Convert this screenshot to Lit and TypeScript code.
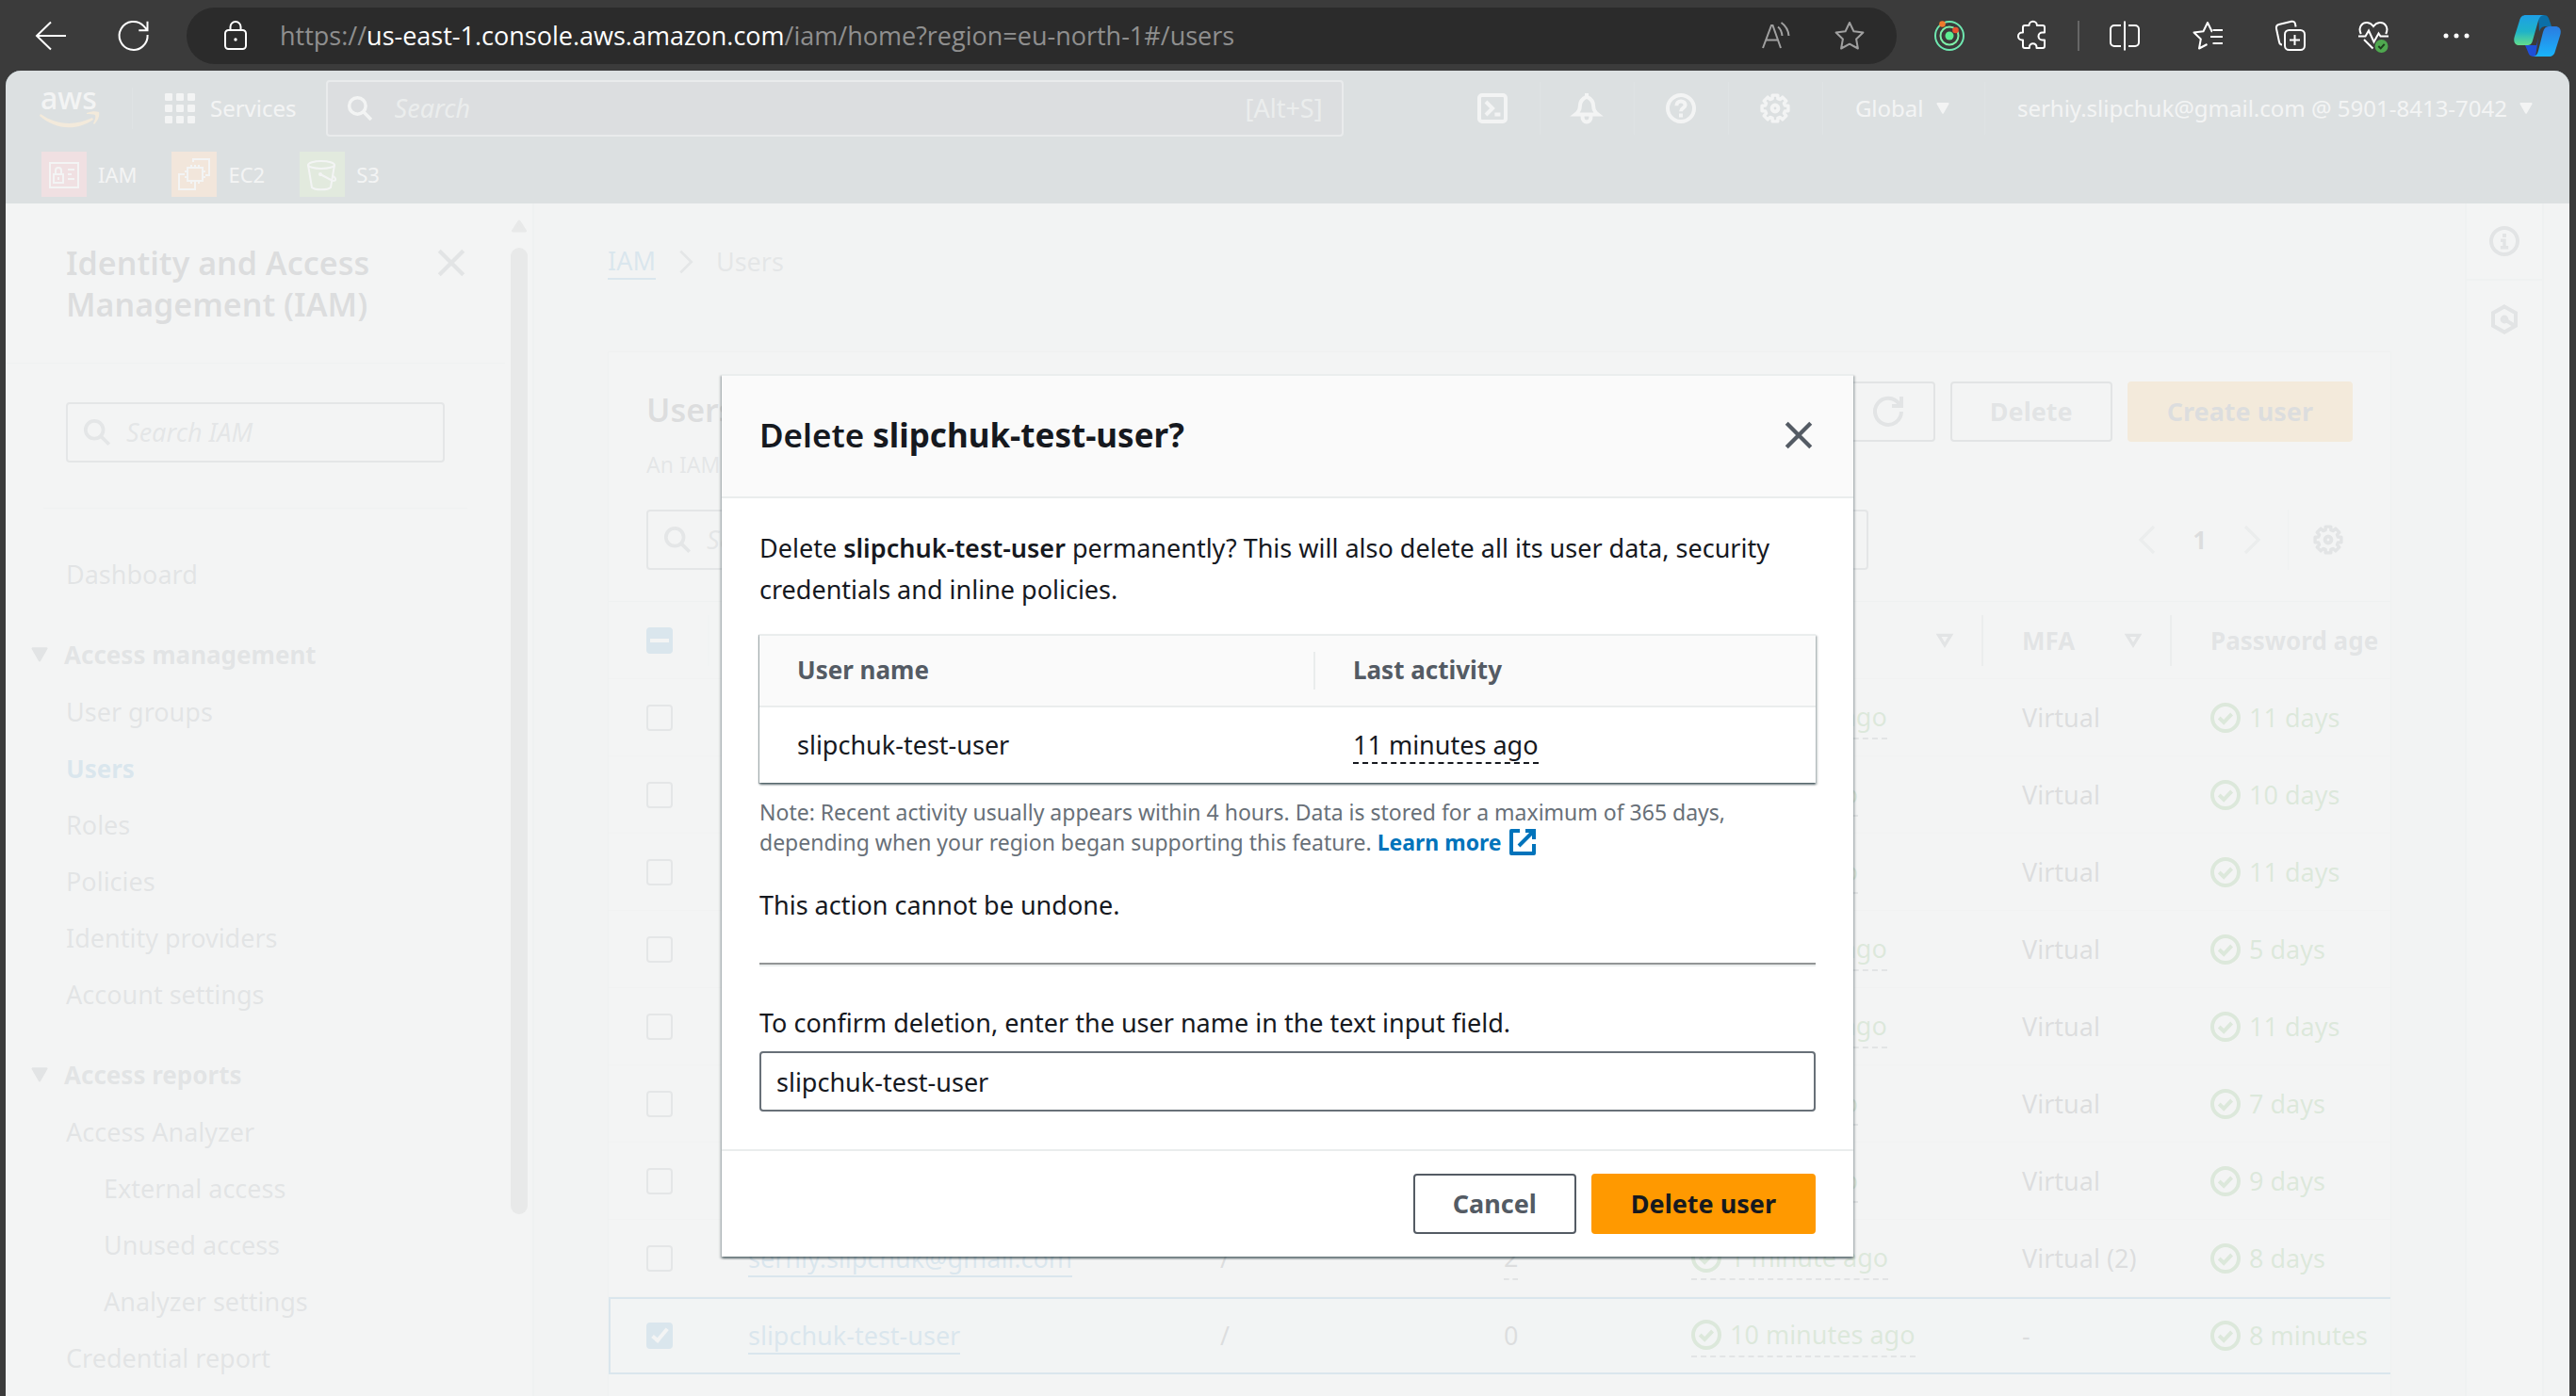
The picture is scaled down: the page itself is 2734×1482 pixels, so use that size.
import { LitElement, html, svg, css, nothing } from "lit";
import { customElement, property } from "lit/decorators.js";
import { classMap } from "lit/directives/class-map.js";

const gearPath = (() => {
  const pts: string[] = [];
  for (let i = 0; i < 8; i++) {
    const base = (i * Math.PI) / 4 - Math.PI / 2;
    const corners: [number, number][] = [[-0.27, 5.4], [-0.2, 7.1], [0.2, 7.1], [0.27, 5.4]];
    for (const [off, r] of corners) {
      pts.push(`${(8 + r * Math.cos(base + off)).toFixed(2)} ${(8 + r * Math.sin(base + off)).toFixed(2)}`);
    }
  }
  return `M${pts.join("L")}Z`;
})();

/* Line icons on a 16-unit grid. */
const consoleIcons: Record<string, unknown> = {
  search: svg`<circle cx="6.5" cy="6.5" r="5"/><path d="M10.2 10.2l4.6 4.6"/>`,
  close: svg`<path d="M2 2l12 12M14 2L2 14"/>`,
  refresh: svg`<path d="M10 5h5V0"/><path d="M15 8a7 7 0 1 1-1.2-4"/>`,
  gear: svg`<path stroke-width="1.7" stroke-linejoin="round" d=${gearPath}/><circle cx="8" cy="8" r="1.7"/>`,
  positive: svg`<circle cx="8" cy="8" r="7"/><path d="M4.6 8l2.5 2.4 4.2-4.4"/>`,
  info: svg`<circle cx="8" cy="8" r="7"/><path d="M8 4v2" /><path d="M6 7.6h2v4M5.9 11.4h4.2" stroke-width="1.7"/>`,
  hexagon: svg`<path d="M8 1.2l6 3.4v6.8l-6 3.4-6-3.4V4.600z"/><circle cx="8" cy="8" r="1.2"/><path d="M8.5 8.400l5 3"/>`,
  external: svg`<path d="M9.500 2H14v4.500M6 10l8-8"/><path d="M14 9v5H2V2h4.500" stroke-linejoin="round"/>`,
  caret: svg`<path d="M3.500 4h9L8 11.800z" fill="currentColor" stroke-width="1.5" stroke-linejoin="round"/>`,
  sort: svg`<path d="M4 4.500h8L8 11z"/>`,
  left: svg`<path d="M11.500 1l-7 7 7 7" stroke-width="1.7"/>`,
  right: svg`<path d="M4.500 1l7 7-7 7" stroke-width="1.7"/>`,
  grid: svg`<g fill="currentColor" stroke="none">${[0, 6, 12].map((y) => [0, 6, 12].map((x) => svg`<rect x=${x} y=${y} width="4" height="4" rx=".6"/>`))}</g>`,
  shell: svg`<rect x="1" y="1" width="14" height="14" rx="1.500"/><path d="M4.500 4.500L8 8l-3.500 3.500M9.200 11.200h3"/>`,
  bell: svg`<path d="M8 1.800c-2.700 1.200-3.600 3-3.600 5.200 0 2-1 3.200-2.400 4.300h12c-1.400-1.100-2.400-2.300-2.400-4.300 0-2.200-.9-4-3.600-5.200zM8 0v2"/><path d="M5.800 12v1a2.200 2.200 0 0 0 4.400 0v-1"/>`,
  help: svg`<circle cx="8" cy="8" r="7"/><path d="M5.700 6.600C5.700 5 6.700 4.200 8 4.200s2.300.8 2.300 2c0 1.700-2.300 1.600-2.300 3.400"/><path d="M8 10.800v2"/>`,
};

/* Toolbar icons on a 32-unit grid. */
const toolbarIcons: Record<string, unknown> = {
  back: svg`<path d="M32 16H1M16 1.500L1 16l15 14.500"/>`,
  reload: svg`<path d="M30.600 15A15 15 0 1 1 26.500 5.600l3.500 4M30.500 .8v9.400h-9.200"/>`,
  lock: svg`<rect x="5" y="10" width="22" height="20" rx="3.500"/><path d="M10.500 10V6.500a5.500 5.500 0 0 1 11 0V10"/><circle cx="16" cy="20" r="1.700" fill="currentColor" stroke="none"/>`,
  star: svg`<path d="M16 2l4.400 9.200 10 1.300-7.300 7 1.800 10L16 24.700 7.100 29.500l1.800-10-7.300-7 10-1.300z" stroke-linejoin="round"/>`,
  read: svg`<path d="M2 29L11 5h1.500L21 29M5 20.500h13"/><path d="M18 6.500c2.600 2 4 5 4.500 9.500M21.500 2c5 3.500 7.500 8 8 14"/>`,
  puzzle: svg`<path stroke-linejoin="round" d="M12.500 5a4.200 4.200 0 0 1 8.400 0H27a2 2 0 0 1 2 2v5.500h-2.500a4 4 0 0 0 0 8H29V27a2 2 0 0 1-2 2h-6.500v-1a3.800 3.800 0 0 0-7.600 0v1H8a2 2 0 0 1-2-2v-6.500H5a4 4 0 0 1 0-8h1V7a2 2 0 0 1 2-2z"/>`,
  split: svg`<path d="M12 5H5a4 4 0 0 0-4 4v14a4 4 0 0 0 4 4h7M20 5h7a4 4 0 0 1 4 4v14a4 4 0 0 1-4 4h-7M16 .5v31"/>`,
  favorites: svg`<path stroke-linejoin="round" d="M21 11.200h-.5L16 2l-4.500 9.200-10 1.300 7.300 7L7 29.500l8.500-4.500"/><path d="M21.500 10H32M19 17h13M21.500 24H32"/>`,
  collections: svg`<rect x="10" y="10" width="21" height="21" rx="4.500"/><path d="M20.500 15v11M15 20.500h11"/><path d="M7 25.500c-1.500 0-2.600-1-3-3L1 8.500C.5 6 1.500 4.600 3.600 4L17 .8c2.300-.5 3.800.8 4 2.700l.6 3"/>`,
  health: svg`<path d="M2.800 14C-1 6 5 1.500 9.500 2c3 .3 5 2 6.500 4 1.500-2 3.500-3.700 6.500-4C27 1.500 33 6 29.200 14M0 16.500h7.500l3.500-6 5.500 12 5-9 2 3H32M6 20l9.500 9.500"/><circle cx="24.500" cy="27" r="7" fill="#4fa84f" stroke="none"/><path d="M21.300 27l2.400 2.400 4-4.600" stroke="#1d3d1d"/>`,
  more: svg`<g fill="currentColor" stroke="none"><circle cx="5" cy="16" r="2.500"/><circle cx="16" cy="16" r="2.500"/><circle cx="27" cy="16" r="2.500"/></g>`,
  rings: svg`<g stroke="#7ef0a8"><circle cx="16" cy="16" r="15" stroke="#6fe8b0"/><circle cx="16" cy="16" r="9.500"/></g><circle cx="16" cy="16" r="4.500" fill="#5dee92" stroke="none"/><circle cx="8.500" cy="3.500" r="3.300" fill="#f07a2c" stroke="none"/><circle cx="22.500" cy="10" r="3.300" fill="#e8532f" stroke="none"/>`,
};

const glyph = (name: string, cls = "") =>
  html`<svg class="ico ${cls}" viewBox="0 0 16 16" fill="none" stroke="currentColor" stroke-width="2" aria-hidden="true">${consoleIcons[name]}</svg>`;
const tool = (name: string) =>
  html`<svg class="ico" viewBox="0 0 32 32" fill="none" stroke="currentColor" stroke-width="2" aria-hidden="true">${toolbarIcons[name]}</svg>`;

const shared = css`
  *, *::before, *::after { box-sizing: border-box; }
  :host { display: block; font: 27px/44px "Noto Sans", "Open Sans", sans-serif; color: #16191f; }
  button, input { font: inherit; color: inherit; margin: 0; }
  button { background: none; border: 0; padding: 0; display: flex; align-items: center; justify-content: center; }
  h1, h2, p, ul, table { margin: 0; padding: 0; }
  ul { list-style: none; }
  a { color: inherit; text-decoration: none; }
  .ico { width: 32px; height: 32px; display: block; flex: none; overflow: visible; }
  .btn { height: 64px; padding: 0 40px; border: 2px solid #545b64; border-radius: 4px; color: #545b64; font-weight: 700; white-space: nowrap; }
  .btn.primary { background: #ff9900; border-color: #ff9900; color: #16191f; }
`;

@customElement("browser-toolbar")
class BrowserToolbar extends LitElement {
  static styles = [shared, css`
    :host { color: #fff; }
    .bar { display: flex; align-items: center; height: 75px; padding-left: 10px; background: #3b3b3b; }
    .slot { width: 88px; height: 60px; }
    .slot.last { width: 83px; }
    .address { flex: 1; display: flex; align-items: center; height: 60px; margin: 0 12px; padding: 0 34px 0 36px; border-radius: 30px; background: #2b2b2b; }
    .url { flex: 1; margin-left: 31px; color: #8f8f8f; font: 27px/36px "Open Sans", sans-serif; white-space: nowrap; }
    .url b { color: #fff; font-weight: 400; }
    .address button { color: #a0a0a0; margin-left: 46px; }
    .address .site { color: #fff; margin: 0; }
    .rule { width: 2px; height: 32px; margin: 0 4px; background: #666; }
    .copilot { width: 50px; height: 44px; }
  `];
  render() {
    const slot = (label: string, name: string) => html`<button class="slot" aria-label=${label}>${tool(name)}</button>`;
    return html`<div class="bar">
      ${slot("Back", "back")}${slot("Refresh", "reload")}
      <div class="address">
        <button class="site" aria-label="Site information">${tool("lock")}</button>
        <span class="url">https://<b>us-east-1.console.aws.amazon.com</b>/iam/home?region=eu-north-1#/users</span>
        <button aria-label="Read aloud">${tool("read")}</button>
        <button aria-label="Add to favorites">${tool("star")}</button>
      </div>
      ${slot("Extension", "rings")}${slot("Extensions", "puzzle")}
      <span class="rule"></span>
      ${slot("Split screen", "split")}${slot("Favorites", "favorites")}${slot("Collections", "collections")}
      ${slot("Browser essentials", "health")}${slot("More", "more")}
      <button class="slot last" aria-label="Copilot">
        <svg class="copilot" viewBox="0 0 50 44" aria-hidden="true">
          <defs>
            <linearGradient id="ca" x1="0" y1="0" x2="0" y2="1"><stop offset="0" stop-color="#1d9fe6"/><stop offset=".55" stop-color="#1fb3c8"/><stop offset="1" stop-color="#63dd8c"/></linearGradient>
            <linearGradient id="cb" x1="0" y1="0" x2="0" y2="1"><stop offset="0" stop-color="#2b7be0"/><stop offset="1" stop-color="#19b4fb"/></linearGradient>
          </defs>
          <path d="M26 0h6c4 0 5 3 6 6l2 6h-6c-4 0-6 2-7 6z" fill="#0b6fa8"/>
          <path d="M12 32h12l2-8-3 20c-6 0-7-2-8-5z" fill="#1f4fd8"/>
          <path d="M13 0h19c-3 0-5 2-6 6l-6 21c-1 4-3 5-6 5H6c-5 0-7-4-5-10L6 6c1-4 3-6 7-6z" fill="url(#ca)"/>
          <path d="M37 44H20c3 0 5-2 6-6l5-20c1-4 3-6 6-6h7c5 0 7 4 5 10l-5 16c-1 4-3 6-7 6z" fill="url(#cb)"/>
        </svg>
      </button>
    </div>`;
  }
}

@customElement("console-header")
class ConsoleHeader extends LitElement {
  static styles = [shared, css`
    :host { background: #1c3540; color: #fff; font-size: 24px; }
    .top { display: flex; align-items: center; height: 80px; padding: 0 36px; white-space: nowrap; }
    .logo { width: 64px; height: 60px; }
    .logo text { font: 500 32px "Noto Sans", sans-serif; }
    .services { gap: 16px; margin-left: 34px; padding-left: 34px; height: 44px; border-left: 1px solid #34505c; }
    .search { flex: 0 1 1080px; display: flex; align-items: center; gap: 20px; height: 60px; margin-left: 31px; padding: 0 20px; border: 2px solid #98a4ae; border-radius: 4px; background: #192534; font-size: 27px; }
    .search .ico { width: 28px; height: 28px; }
    .search input { flex: 1; min-width: 0; border: 0; padding: 0 0 0 3px; background: none; }
    .search input::placeholder { color: #aab7b8; font-style: italic; opacity: 1; }
    .search span { color: #aab7b8; }
    .gap { flex: 1; }
    .cell { width: 100px; height: 56px; border-right: 1px solid #34505c; }
    .menu { gap: 10px; height: 56px; padding-left: 34px; }
    .menu.region { width: 172px; border-right: 1px solid #34505c; justify-content: flex-start; }
    .menu .ico { width: 20px; height: 24px; }
    .favs { display: flex; align-items: center; height: 61px; padding: 0 0 2px 38px; gap: 37px; font-size: 22px; }
    .favs a { display: flex; align-items: center; gap: 12px; }
    .tile { width: 48px; height: 48px; }
  `];
  render() {
    return html`<header>
      <div class="top">
        <svg class="logo" viewBox="0 0 64 60" role="img" aria-label="AWS">
          <text x="1" y="31" fill="#fff">aws</text>
          <path d="M1 36c17 12 36 13 55 4l1 2C38 55 16 52 0 38z" fill="#ff9900"/>
          <path d="M50 35c5-2 10-2 13-1 1 4-1 9-5 13l-1-1c2-4 3-7 2-9-2-1-5-1-9-1z" fill="#ff9900"/>
        </svg>
        <button class="services">${glyph("grid")}Services</button>
        <label class="search">${glyph("search")}<input type="text" placeholder="Search" aria-label="Search" /><span>[Alt+S]</span></label>
        <span class="gap"></span>
        <button class="cell" aria-label="CloudShell">${glyph("shell")}</button>
        <button class="cell" aria-label="Notifications">${glyph("bell")}</button>
        <button class="cell" aria-label="Support">${glyph("help")}</button>
        <button class="cell" aria-label="Settings">${glyph("gear")}</button>
        <button class="menu region">Global ${glyph("caret")}</button>
        <button class="menu">serhiy.slipchuk@gmail.com @ 5901-8413-7042 ${glyph("caret")}</button>
      </div>
      <nav class="favs" aria-label="Favorites">
        <a href="#iam"><svg class="tile" viewBox="0 0 48 48" fill="none" stroke="#fff" stroke-width="2"><rect width="48" height="48" fill="#dd344c" stroke="none"/><path d="M9 12h30v26H9zM13 24h10v9H13zM15 24v-4a3 3 0 0 1 6 0v4M28 19h7M28 24h4M28 29h7M18 27v3"/></svg>IAM</a>
        <a href="#ec2"><svg class="tile" viewBox="0 0 48 48" fill="none" stroke="#fff" stroke-width="2"><rect width="48" height="48" fill="#ed7100" stroke="none"/><path d="M17 17h16v14H17zM21 17v-3M25 17v-3M29 17v-3M21 34v-3M25 34v-3M29 34v-3M14 21h3M14 27h3M33 21h3M33 27h3M23 11V8h17v17h-4M14 24H8v16h17v-6"/></svg>EC2</a>
        <a href="#s3"><svg class="tile" viewBox="0 0 48 48" fill="none" stroke="#fff" stroke-width="2"><rect width="48" height="48" fill="#4f9a24" stroke="none"/><ellipse cx="23" cy="14" rx="14" ry="4"/><path d="M9 14l4 24c3 3 17 3 20 0l4-24M22 24l13 7c4 0 4-2 1-5"/><circle cx="22" cy="24" r="1"/></svg>S3</a>
      </nav>
    </header>`;
  }
}

type NavItem = { label: string; active?: boolean; nested?: boolean };
const navGroups: { title?: string; items: NavItem[] }[] = [
  { items: [{ label: "Dashboard" }] },
  {
    title: "Access management",
    items: [{ label: "User groups" }, { label: "Users", active: true }, { label: "Roles" }, { label: "Policies" }, { label: "Identity providers" }, { label: "Account settings" }],
  },
  {
    title: "Access reports",
    items: [{ label: "Access Analyzer" }, { label: "External access", nested: true }, { label: "Unused access", nested: true }, { label: "Analyzer settings", nested: true }, { label: "Credential report" }],
  },
];

@customElement("side-navigation")
class SideNavigation extends LitElement {
  static styles = [shared, css`
    :host { background: #fff; border-right: 2px solid #d5dbdb; }
    .wrap { display: flex; height: 100%; }
    .content { flex: 1; min-width: 0; color: #545b64; }
    .head { display: flex; justify-content: space-between; padding: 41px 44px 40px 64px; border-bottom: 1px solid #d5dbdb; }
    h2 { width: 340px; font-size: 34px; line-height: 44px; font-weight: 600; color: #16191f; }
    .head button { height: 44px; }
    .head .ico { width: 34px; height: 34px; margin-right: -4px; }
    .search { display: flex; align-items: center; gap: 16px; height: 64px; margin: 41px 64px 48px; padding: 0 16px; border: 2px solid #687078; border-radius: 4px; }
    .search .ico { width: 30px; height: 30px; color: #687078; }
    .search input { flex: 1; min-width: 0; border: 0; padding: 0; background: none; }
    .search input::placeholder { color: #687078; font-style: italic; opacity: 1; }
    nav { margin: 0 40px; padding-top: 40px; border-top: 1px solid #d5dbdb; display: grid; gap: 24px; }
    li { height: 60px; display: flex; align-items: center; padding-left: 24px; white-space: nowrap; }
    li.nested { padding-left: 64px; }
    li.active { color: #0073bb; font-weight: 700; font-size: 26px; }
    .group { display: flex; height: 62px; margin-left: -17px; gap: 13px; font-size: 26px; font-weight: 700; }
    .group .ico { width: 26px; height: 26px; }
    .scroll { width: 29px; padding: 15px 5px 0 6px; display: flex; flex: none; flex-direction: column; gap: 14px; color: #8a8a8a; }
    .scroll .ico { width: 18px; height: 18px; }
    .thumb { height: 82%; border-radius: 9px; background: #8a8a8a; }
  `];
  render() {
    return html`<div class="wrap">
      <div class="content">
        <div class="head"><h2>Identity and Access Management (IAM)</h2><button aria-label="Close navigation">${glyph("close")}</button></div>
        <label class="search">${glyph("search")}<input type="text" placeholder="Search IAM" aria-label="Search IAM" /></label>
        <nav aria-label="IAM">
          ${navGroups.map((g) => html`<div>
            ${g.title ? html`<button class="group">${glyph("caret")}${g.title}</button>` : nothing}
            <ul>${g.items.map((i) => html`<li class=${classMap({ active: !!i.active, nested: !!i.nested })}><a href="#users">${i.label}</a></li>`)}</ul>
          </div>`)}
        </nav>
      </div>
      <div class="scroll" aria-hidden="true">
        <svg class="ico" viewBox="0 0 18 18"><path d="M9 4l6.500 10h-13z" fill="currentColor" stroke="currentColor" stroke-width="3" stroke-linejoin="round"/></svg>
        <div class="thumb"></div>
      </div>
    </div>`;
  }
}

type UserRow = { name: string; groups: string; activity: string; mfa: string; age: string; selected?: boolean };
const users: UserRow[] = [
  { name: "", groups: "", activity: "16 hours ago", mfa: "Virtual", age: "11 days" },
  { name: "", groups: "", activity: "2 days ago", mfa: "Virtual", age: "10 days" },
  { name: "", groups: "", activity: "2 days ago", mfa: "Virtual", age: "11 days" },
  { name: "", groups: "", activity: "16 hours ago", mfa: "Virtual", age: "5 days" },
  { name: "", groups: "", activity: "16 hours ago", mfa: "Virtual", age: "11 days" },
  { name: "", groups: "", activity: "2 days ago", mfa: "Virtual", age: "7 days" },
  { name: "", groups: "", activity: "2 days ago", mfa: "Virtual", age: "9 days" },
  { name: "serhiy.slipchuk@gmail.com", groups: "2", activity: "1 minute ago", mfa: "Virtual (2)", age: "8 days" },
  { name: "slipchuk-test-user", groups: "0", activity: "10 minutes ago", mfa: "-", age: "8 minutes", selected: true },
];

@customElement("users-page")
class UsersPage extends LitElement {
  static styles = [shared, css`
    :host { padding: 43px 78px 0; min-width: 0; background: #f2f3f3; }
    .crumbs { display: flex; align-items: center; gap: 19px; height: 38px; color: #687078; line-height: 36px; }
    .crumbs a { color: #0073bb; border-bottom: 2px solid #0073bb; }
    .crumbs .ico { width: 26px; height: 32px; }
    .card { margin-top: 76px; height: 100%; background: #fff; border: 1px solid #d5dbdb; overflow: hidden; }
    .head { display: flex; gap: 16px; padding: 31px 40px 0; }
    .title { flex: 1; padding-top: 8px; }
    h1 { font-size: 34px; line-height: 44px; font-weight: 600; }
    .title p { margin-top: 20px; font-size: 23px; line-height: 32px; color: #687078; white-space: nowrap; }
    .refresh { padding: 0 32px; }
    .tools { display: flex; align-items: center; justify-content: space-between; padding: 32px 50px 33px 40px; }
    .search { display: flex; align-items: center; gap: 16px; width: 1297px; height: 64px; padding: 0 16px; border: 2px solid #687078; border-radius: 4px; }
    .search .ico { width: 30px; height: 30px; color: #687078; }
    .search input { flex: 1; border: 0; padding: 0; background: none; }
    .search input::placeholder { color: #687078; font-style: italic; opacity: 1; }
    .pager { display: flex; align-items: center; color: #aab7b8; gap: 32px; }
    .pager b { color: #16191f; font-size: 26px; }
    .pager .prefs { height: 64px; margin-left: -10px; padding-left: 26px; border-left: 1px solid #d5dbdb; color: #545b64; }
    table { width: 2000px; table-layout: fixed; border-collapse: separate; border-spacing: 0; border-top: 1px solid #d5dbdb; }
    .c-box { width: 108px; } .c-name { width: 501px; } .c-path { width: 301px; } .c-groups { width: 199px; } .c-last { width: 351px; } .c-mfa { width: 200px; }
    tr { height: 82px; }
    th, td { padding: 0; text-align: left; border-bottom: 1px solid #e3e8e8; white-space: nowrap; }
    th { font-size: 26px; color: #545b64; }
    td { padding-left: 40px; }
    .th { display: flex; align-items: center; justify-content: space-between; height: 54px; margin-right: 1px; padding: 0 26px 0 40px; border-right: 2px solid #aab7b8; }
    .th.plain { border-right-color: #eaeded; }
    .th .ico { width: 26px; height: 26px; }
    tr.selected td { background: #f1faff; border-top: 2px solid #0073bb; border-bottom: 2px solid #0073bb; }
    tr.selected td:first-child { border-left: 2px solid #0073bb; padding-left: 38px; }
    input[type="checkbox"] { appearance: none; width: 28px; height: 28px; border: 2px solid #687078; border-radius: 4px; display: grid; place-items: center; }
    input[type="checkbox"]:checked, input[type="checkbox"]:indeterminate { background-color: #0073bb; border-color: #0073bb; }
    input[type="checkbox"]:indeterminate::before { content: ""; width: 20px; height: 4px; background: #fff; }
    input[type="checkbox"]:checked::before { content: ""; width: 9px; height: 18px; margin-bottom: 5px; border: solid #fff; border-width: 0 4px 4px 0; transform: rotate(40deg); }
    .link { display: inline-block; line-height: 36px; color: #0073bb; border-bottom: 2px solid #0073bb; }
    .ok { display: flex; width: max-content; align-items: center; gap: 9px; color: #1d8102; }
    .dash { border-bottom: 2px dashed #545b64; }
    .num { display: inline-block; line-height: 44px; }
  `];
  render() {
    const col = (label: string) => html`<th scope="col"><div class="th">${label}${label ? glyph("sort") : nothing}</div></th>`;
    return html`
      <nav class="crumbs" aria-label="Breadcrumb"><a href="#iam">IAM</a>${glyph("right")}<span>Users</span></nav>
      <section class="card">
        <div class="head">
          <div class="title"><h1>Users (9)</h1><p>An IAM user is an identity with long-term credentials that is used to interact with AWS in an account.</p></div>
          <button class="btn refresh" aria-label="Refresh">${glyph("refresh")}</button>
          <button class="btn">Delete</button>
          <button class="btn primary">Create user</button>
        </div>
        <div class="tools">
          <label class="search">${glyph("search")}<input type="text" placeholder="Search" aria-label="Search users" /></label>
          <div class="pager">
            <button aria-label="Previous page">${glyph("left")}</button><b>1</b><button aria-label="Next page">${glyph("right")}</button>
            <button class="prefs" aria-label="Preferences">${glyph("gear")}</button>
          </div>
        </div>
        <table>
          <colgroup><col class="c-box" /><col class="c-name" /><col class="c-path" /><col class="c-groups" /><col class="c-last" /><col class="c-mfa" /><col /></colgroup>
          <thead><tr>
            <th><div class="th plain"><input type="checkbox" aria-label="Select all users" .indeterminate=${true} /></div></th>
            ${col("User name")}${col("Path")}${col("Groups")}${col("Last activity")}${col("MFA")}${col("Password age")}
          </tr></thead>
          <tbody>
            ${users.map((u) => html`<tr class=${classMap({ selected: !!u.selected })}>
              <td><input type="checkbox" aria-label="Select user" .checked=${!!u.selected} /></td>
              <td>${u.name ? html`<a class="link" href="#user">${u.name}</a>` : nothing}</td>
              <td>/</td>
              <td>${u.groups ? html`<span class=${classMap({ num: true, dash: u.groups !== "0" })}>${u.groups}</span>` : nothing}</td>
              <td><span class="ok dash">${glyph("positive")}${u.activity}</span></td>
              <td>${u.mfa}</td>
              <td><span class="ok">${glyph("positive")}${u.age}</span></td>
            </tr>`)}
          </tbody>
        </table>
      </section>`;
  }
}

@customElement("delete-dialog")
class DeleteDialog extends LitElement {
  @property() user = "";
  static styles = [shared, css`
    :host { width: 1201px; background: #fff; border-top: 2px solid #eaeded; box-shadow: 0 2px 2px rgba(0, 28, 36, .4), 2px 2px 2px rgba(0, 28, 36, .18), -2px 2px 2px rgba(0, 28, 36, .18); }
    .head { display: flex; align-items: center; justify-content: space-between; height: 130px; padding: 0 38px 2px 40px; background: #fafafa; border-bottom: 2px solid #eaeded; }
    h2 { font-size: 35px; line-height: 44px; font-weight: 600; }
    h2 b { font-weight: 700; }
    .head button { width: 40px; height: 40px; color: #545b64; }
    .head .ico { width: 34px; height: 34px; }
    .body { padding: 31px 40px 40px; }
    .body b { font-weight: 600; }
    table { width: 100%; margin-top: 25px; border-spacing: 0; table-layout: fixed; border-top: 2px solid #eaeded; box-shadow: 0 2px 2px rgba(0, 28, 36, .5), 2px 2px 2px rgba(0, 28, 36, .18), -1px 1px 1px rgba(0, 28, 36, .25); }
    .c-user { width: 590px; }
    th, td { padding: 0; text-align: left; }
    th { height: 76px; background: #fafafa; border-bottom: 2px solid #eaeded; font-size: 26px; color: #545b64; }
    th div { height: 40px; line-height: 38px; padding-left: 40px; }
    th:first-child div { border-right: 2px solid #eaeded; }
    td { height: 80px; padding-left: 40px; }
    .dash { display: inline-block; line-height: 36px; border-bottom: 2px dashed #16191f; }
    .note { margin-top: 15px; font-size: 23px; line-height: 32px; color: #687078; }
    .note a { display: inline-flex; align-items: center; gap: 6px; vertical-align: top; color: #0073bb; font-weight: 700; }
    .note .ico { width: 32px; height: 32px; }
    .final { margin-top: 29px; }
    hr { margin: 39px 0 38px; border: 0; height: 4px; border-top: 2px solid #929596; border-bottom: 2px solid #eaeded; }
    label { display: block; }
    input { display: block; width: 100%; height: 64px; margin-top: 8px; padding: 0 16px; border: 2px solid #687078; border-radius: 4px; background: #fff; }
    .foot { display: flex; justify-content: flex-end; gap: 16px; padding: 24px 40px; border-top: 2px solid #eaeded; }
  `];
  render() {
    return html`
      <div class="head"><h2 id="title">Delete <b>${this.user}?</b></h2><button aria-label="Close dialog">${glyph("close")}</button></div>
      <div class="body">
        <p>Delete <b>${this.user}</b> permanently? This will also delete all its user data, security credentials and inline policies.</p>
        <table>
          <colgroup><col class="c-user" /><col /></colgroup>
          <thead><tr><th scope="col"><div>User name</div></th><th scope="col"><div>Last activity</div></th></tr></thead>
          <tbody><tr><td>${this.user}</td><td><span class="dash">11 minutes ago</span></td></tr></tbody>
        </table>
        <p class="note">Note: Recent activity usually appears within 4 hours. Data is stored for a maximum of 365 days, depending when your region began supporting this feature. <a href="#learn">Learn more ${glyph("external")}</a></p>
        <p class="final">This action cannot be undone.</p>
        <hr />
        <label for="confirm">To confirm deletion, enter the user name in the text input field.</label>
        <input id="confirm" type="text" .value=${this.user} />
      </div>
      <div class="foot"><button class="btn">Cancel</button><button class="btn primary">Delete user</button></div>`;
  }
}

@customElement("app-root")
class AppRoot extends LitElement {
  static styles = [shared, css`
    .window { display: flex; flex-direction: column; height: 100vh; overflow: hidden; background: #3b3b3b; }
    .page { position: relative; flex: 1; min-height: 0; display: flex; flex-direction: column; margin: 0 7px 0 6px; border-radius: 16px 16px 0 0; overflow: hidden; background: #f2f3f3; }
    .cols { flex: 1; min-height: 0; display: grid; grid-template-columns: 561px minmax(0, 1fr) 84px 27px; grid-template-rows: minmax(0, 1fr); }
    .tools { background: #fff; border: solid #d5dbdb; border-width: 0 2px; color: #545b64; }
    .tools button { width: 100%; height: 82px; }
    .tools button:first-child { border-bottom: 2px solid #d5dbdb; }
    .mask { position: absolute; inset: 0; display: flex; justify-content: center; align-items: flex-start; padding-top: 322px; background: rgba(242, 243, 243, .9); }
  `];
  render() {
    return html`<div class="window">
      <browser-toolbar></browser-toolbar>
      <div class="page">
        <console-header></console-header>
        <div class="cols">
          <side-navigation></side-navigation>
          <users-page></users-page>
          <aside class="tools"><button aria-label="Info">${glyph("info")}</button><button aria-label="Assistant">${glyph("hexagon")}</button></aside>
        </div>
        <div class="mask"><delete-dialog role="dialog" aria-modal="true" aria-label="Delete user" user="slipchuk-test-user"></delete-dialog></div>
      </div>
    </div>`;
  }
}
